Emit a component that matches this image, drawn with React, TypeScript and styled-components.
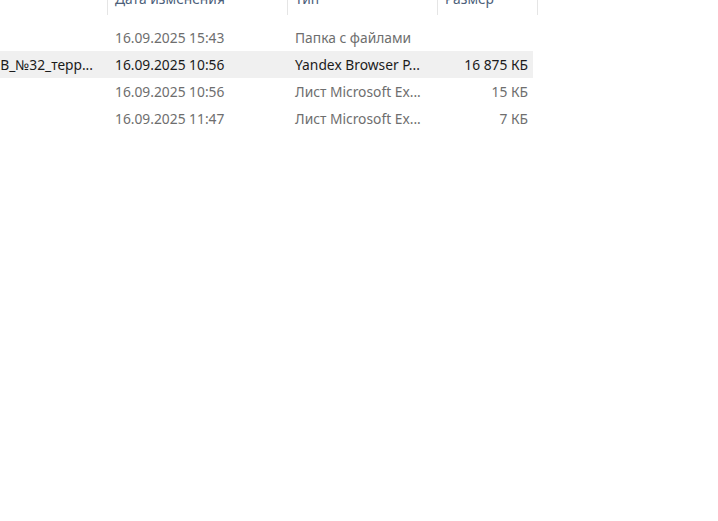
import styled, { createGlobalStyle } from "styled-components";

const GlobalStyle = createGlobalStyle`
  html, body {
    margin: 0;
    padding: 0;
    background: #ffffff;
  }
  body {
    font-family: "Noto Sans", "Open Sans", sans-serif;
    font-size: 13.8px;
  }
`;

const COLS = "107px 180px 150px 96px";

const ListView = styled.div`
  width: 718px;
  height: 521px;
  overflow: hidden;
  background: #fff;
`;

const HeaderRow = styled.div`
  display: grid;
  grid-template-columns: 107px 180px 150px 100px 4px;
  height: 15px;
  overflow: hidden;
  margin-bottom: 9px;
`;

const HeaderCell = styled.div<{ $divider?: boolean }>`
  border-left: ${(p) => (p.$divider ? "1px solid #e5e5e5" : "none")};
  padding-left: 7px;
  color: #4c607a;
  white-space: nowrap;
  overflow: hidden;
`;

const HeaderLabel = styled.span`
  display: block;
  line-height: 18px;
  margin-top: -10px;
`;

const Row = styled.div<{ $selected?: boolean }>`
  display: grid;
  grid-template-columns: ${COLS};
  width: 533px;
  height: 27px;
  align-items: center;
  background: ${(p) => (p.$selected ? "#f0f0f0" : "transparent")};
  color: ${(p) => (p.$selected ? "#1b1b1b" : "#6e6e6e")};
`;

const NameCell = styled.div`
  display: flex;
  justify-content: flex-end;
  overflow: hidden;
  white-space: nowrap;
  padding-right: 14px;
`;

const Cell = styled.div`
  padding-left: 8px;
  white-space: nowrap;
  overflow: hidden;
`;

const SizeCell = styled.div`
  text-align: right;
  padding-right: 5px;
  white-space: nowrap;
`;

const files = [
  { name: "", date: "16.09.2025 15:43", type: "Папка с файлами", size: "" },
  {
    name: "Протокол_ЗАЯВ_№32_терр...",
    date: "16.09.2025 10:56",
    type: "Yandex Browser P...",
    size: "16 875 КБ",
    selected: true,
  },
  { name: "", date: "16.09.2025 10:56", type: "Лист Microsoft Ex...", size: "15 КБ" },
  { name: "", date: "16.09.2025 11:47", type: "Лист Microsoft Ex...", size: "7 КБ" },
];

const headers = ["Дата изменения", "Тип", "Размер", ""];

export default function App() {
  return (
    <>
      <GlobalStyle />
      <ListView>
        <HeaderRow>
          <HeaderCell />
          {headers.map((h, i) => (
            <HeaderCell key={i} $divider>
              <HeaderLabel>{h}</HeaderLabel>
            </HeaderCell>
          ))}
        </HeaderRow>
        {files.map((f, i) => (
          <Row key={i} $selected={f.selected}>
            <NameCell>{f.name}</NameCell>
            <Cell>{f.date}</Cell>
            <Cell>{f.type}</Cell>
            <SizeCell>{f.size}</SizeCell>
          </Row>
        ))}
      </ListView>
    </>
  );
}
